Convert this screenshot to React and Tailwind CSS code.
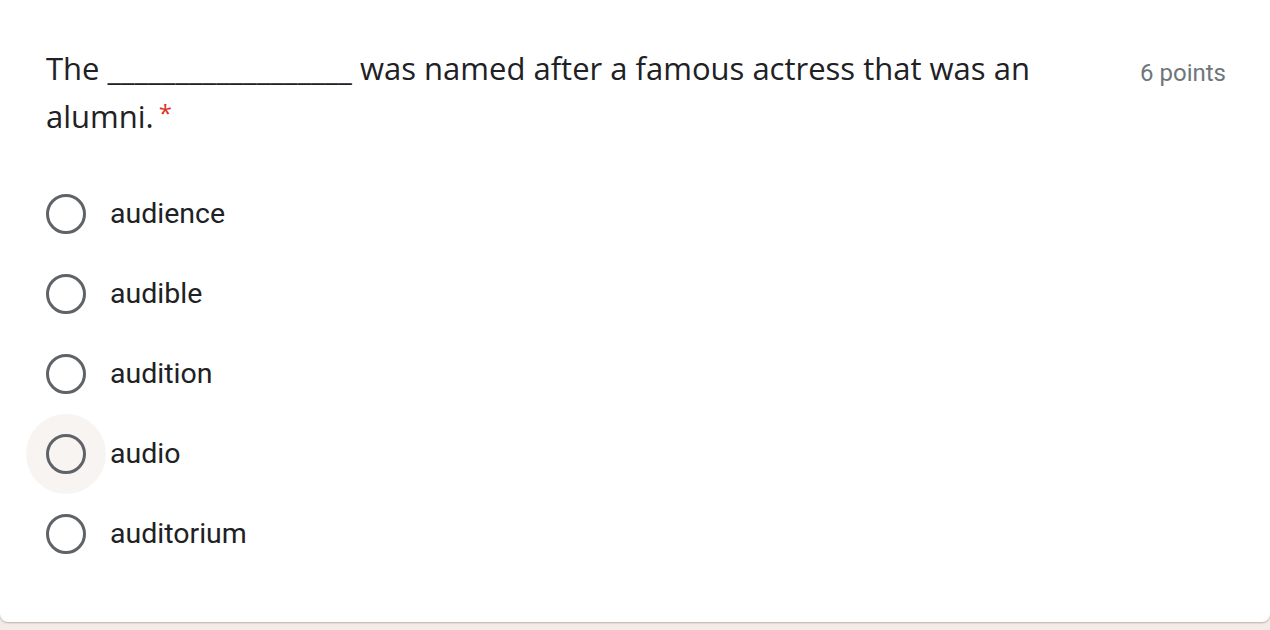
const options = ["audience", "audible", "audition", "audio", "auditorium"];

function Radio({ hover }) {
  return (
    <div className="relative flex h-10 w-10 items-center justify-center">
      {hover && (
        <div className="absolute left-1/2 top-1/2 h-20 w-20 -translate-x-1/2 -translate-y-1/2 rounded-full bg-[#f8f4f2]" />
      )}
      <div className="relative h-[40px] w-[40px] rounded-full border-[3px] border-[#5f6368]" />
    </div>
  );
}

export default function App() {
  return (
    <div className="h-[630px] w-[1270px] overflow-hidden bg-[#f4ebe7]">
      <div className="h-[622px] rounded-b-[8px] bg-white pl-[46px] pr-[44px] pt-[44px] shadow-[0_1px_2px_rgba(0,0,0,0.25)]">
        <div className="flex items-start justify-between">
          <div
            className="w-[1040px] text-[31px] leading-[48px] text-[#202124]"
            style={{ fontFamily: "'Open Sans', sans-serif" }}
          >
            The __________________ was named after a famous actress that was an
            alumni.
            <span className="relative top-[-6px] ml-[5px] inline-block text-[24px] leading-none text-[#d93025]">*</span>
          </div>
          <div
            className="pt-[11px] text-[24px] text-[#70757a]"
            style={{ fontFamily: "Roboto, sans-serif" }}
          >
            6 points
          </div>
        </div>
        <div className="mt-[54px] flex flex-col gap-[40px]">
          {options.map((o) => (
            <div key={o} className="flex items-center gap-[24px]">
              <Radio hover={o === "audio"} />
              <span
                className="text-[28.5px] leading-[40px] text-[#202124]"
                style={{ fontFamily: "Roboto, sans-serif" }}
              >
                {o}
              </span>
            </div>
          ))}
        </div>
      </div>
    </div>
  );
}
